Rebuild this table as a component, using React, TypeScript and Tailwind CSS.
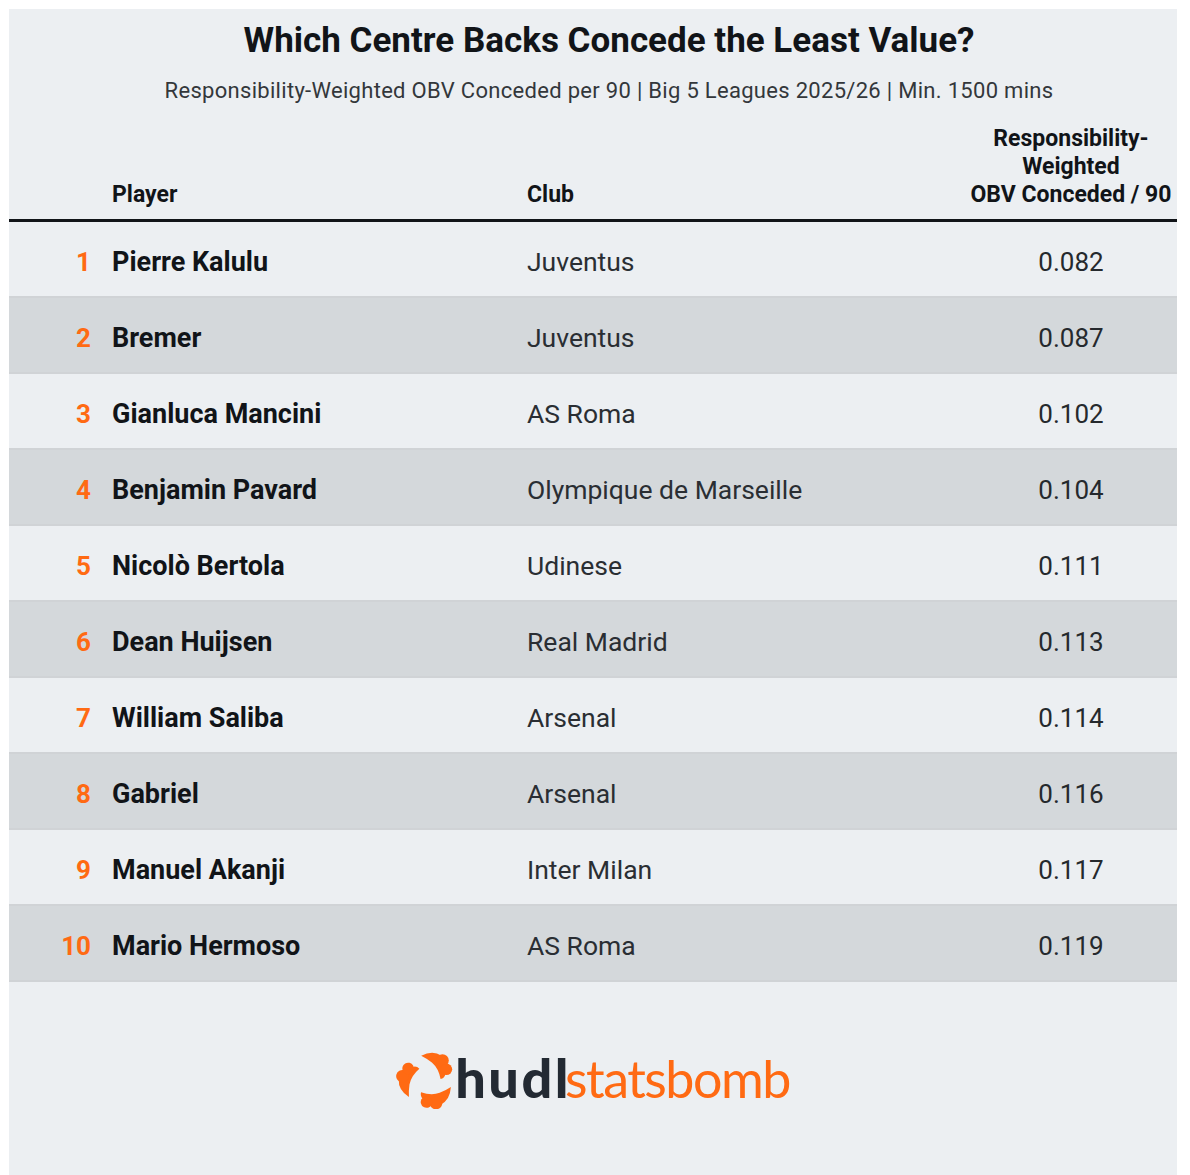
const ROWS = [
  { rank: 1, name: "Pierre Kalulu", club: "Juventus", value: "0.082" },
  { rank: 2, name: "Bremer", club: "Juventus", value: "0.087" },
  { rank: 3, name: "Gianluca Mancini", club: "AS Roma", value: "0.102" },
  { rank: 4, name: "Benjamin Pavard", club: "Olympique de Marseille", value: "0.104" },
  { rank: 5, name: "Nicolò Bertola", club: "Udinese", value: "0.111" },
  { rank: 6, name: "Dean Huijsen", club: "Real Madrid", value: "0.113" },
  { rank: 7, name: "William Saliba", club: "Arsenal", value: "0.114" },
  { rank: 8, name: "Gabriel", club: "Arsenal", value: "0.116" },
  { rank: 9, name: "Manuel Akanji", club: "Inter Milan", value: "0.117" },
  { rank: 10, name: "Mario Hermoso", club: "AS Roma", value: "0.119" },
];

function LogoMark() {
  const piece = (
    <>
      <path d="M26 9 Q38 3 47 9 L51 28 Q50 32 46 33 Q44 22 37 16 Q32 12 26 9 Z" />
      <circle cx="48" cy="14" r="6.5" />
      <circle cx="52" cy="23" r="6" />
    </>
  );
  return (
    <svg viewBox="0 0 64 64" className="h-[62px] w-[62px]" fill="#ff6a13">
      <g>{piece}</g>
      <g transform="rotate(120 32 34)">{piece}</g>
      <g transform="rotate(240 32 34)">{piece}</g>
    </svg>
  );
}

export default function App() {
  return (
    <div className="min-h-[1175px] bg-white pl-[9px] pt-[9px] font-['Roboto','Liberation_Sans',sans-serif]">
      <div className="w-[1168px] min-h-[1166px] bg-[#eceff2] pt-[12px] pb-[70px]">
        <div className="pl-[32px] text-center">
          <h1 className="text-[35px] leading-[40px] font-bold text-[#111418]">
            Which Centre Backs Concede the Least Value?
          </h1>
          <p className="mt-[16px] text-[22px] leading-[28px] tracking-[0.3px] text-[#33373b]">
            Responsibility-Weighted OBV Conceded per 90 | Big 5 Leagues 2025/26 | Min. 1500 mins
          </p>
        </div>

        <div className="mt-[20px] flex items-end border-b-[3px] border-[#111418] pb-[10px] text-[23px] leading-[28px] font-bold text-[#111418]">
          <div className="w-[82px]" />
          <div className="w-[436px] pl-[21px]">Player</div>
          <div className="flex-1">Club</div>
          <div className="w-[212px] text-center">
            Responsibility-
            <br />
            Weighted
            <br />
            OBV Conceded / 90
          </div>
        </div>

        <div>
          {ROWS.map((row) => (
            <div
              key={row.rank}
              className={
                "flex h-[76px] items-center border-b-2 border-[#d0d3d6] pt-[6px] text-[26px] " +
                (row.rank % 2 === 0 ? "bg-[#d4d8db]" : "bg-[#eceff2]")
              }
            >
              <div className="w-[82px] text-right font-bold text-[#ff6a13]">{row.rank}</div>
              <div className="w-[436px] pl-[21px] text-[27px] font-bold text-[#111418]">{row.name}</div>
              <div className="flex-1 text-[26.5px] text-[#2a2e33]">{row.club}</div>
              <div className="w-[212px] text-center text-[#25292d]">{row.value}</div>
            </div>
          ))}
        </div>

        <div className="mt-[64px] flex items-center justify-center">
          <LogoMark />
          <span className="ml-[-3px] font-['Lato',sans-serif] text-[54px] leading-[64px] font-black tracking-[2.5px] text-[#232a33]">
            hudl
          </span>
          <span className="ml-[-6px] font-['Lato',sans-serif] text-[52px] leading-[64px] font-normal tracking-[-1.5px] text-[#ff6a13]">
            statsbomb
          </span>
        </div>
      </div>
    </div>
  );
}
